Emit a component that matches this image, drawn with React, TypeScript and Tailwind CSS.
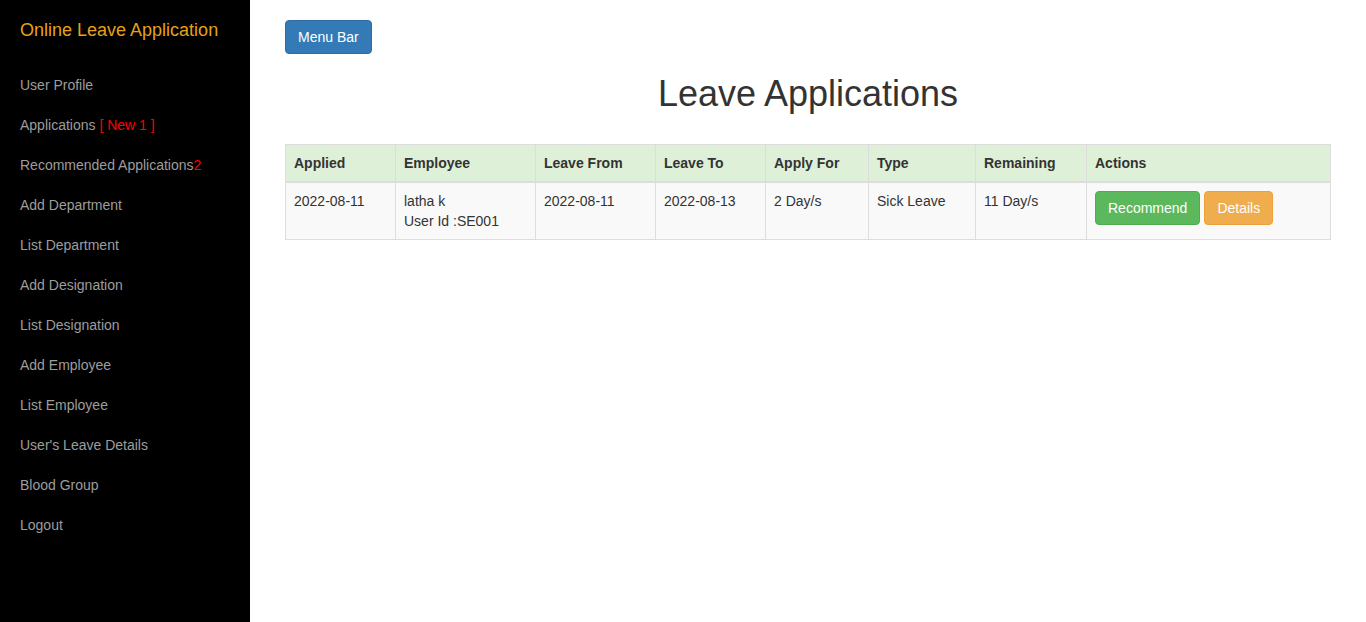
import React from "react";

const menu: { label: string; extra?: string }[] = [
  { label: "User Profile" },
  { label: "Applications ", extra: "[ New 1 ]" },
  { label: "Recommended Applications", extra: "2" },
  { label: "Add Department" },
  { label: "List Department" },
  { label: "Add Designation" },
  { label: "List Designation" },
  { label: "Add Employee" },
  { label: "List Employee" },
  { label: "User's Leave Details" },
  { label: "Blood Group" },
  { label: "Logout" },
];

const cols = [
  { name: "Applied", w: "w-[110px]" },
  { name: "Employee", w: "w-[140px]" },
  { name: "Leave From", w: "w-[120px]" },
  { name: "Leave To", w: "w-[110px]" },
  { name: "Apply For", w: "w-[103px]" },
  { name: "Type", w: "w-[107px]" },
  { name: "Remaining", w: "w-[111px]" },
  { name: "Actions", w: "" },
];

export default function App() {
  return (
    <div className="flex min-h-[622px] font-['Liberation_Sans',Arial,sans-serif] text-[14px] leading-5 text-[#333]">
      <aside className="w-[250px] shrink-0 bg-black">
        <h1 className="px-5 pt-[19px] pb-[14px] text-[18px] leading-[22px] text-[#e6a117]">
          Online Leave Application
        </h1>
        <nav className="flex flex-col pt-[10px]">
          {menu.map((m) => (
            <a key={m.label} className="block px-5 py-[10px] text-[#9d9d9d]">
              {m.label}
              {m.extra && <span className="text-[#ff0000]">{m.extra}</span>}
            </a>
          ))}
        </nav>
      </aside>
      <main className="flex-1 px-[35px] pt-5">
        <button className="h-[34px] rounded border border-[#2e6da4] bg-[#337ab7] px-3 text-white">
          Menu Bar
        </button>
        <h2 className="mt-5 mb-[30px] text-center text-[36px] leading-[40px] text-[#333]">
          Leave Applications
        </h2>
        <table className="w-full table-fixed border-collapse border border-[#ddd]">
          <thead>
            <tr className="bg-[#dff0d8]">
              {cols.map((c) => (
                <th
                  key={c.name}
                  className={`${c.w} border border-b-2 border-[#ddd] p-2 text-left font-bold`}
                >
                  {c.name}
                </th>
              ))}
            </tr>
          </thead>
          <tbody>
            <tr className="bg-[#f9f9f9] align-top">
              <td className="border border-[#ddd] p-2">2022-08-11</td>
              <td className="border border-[#ddd] p-2">
                latha k
                <br />
                User Id :SE001
              </td>
              <td className="border border-[#ddd] p-2">2022-08-11</td>
              <td className="border border-[#ddd] p-2">2022-08-13</td>
              <td className="border border-[#ddd] p-2">2 Day/s</td>
              <td className="border border-[#ddd] p-2">Sick Leave</td>
              <td className="border border-[#ddd] p-2">11 Day/s</td>
              <td className="border border-[#ddd] p-2">
                <div className="flex gap-1">
                  <button className="h-[34px] rounded border border-[#4cae4c] bg-[#5cb85c] px-3 text-white">
                    Recommend
                  </button>
                  <button className="h-[34px] rounded border border-[#eea236] bg-[#f0ad4e] px-3 text-white">
                    Details
                  </button>
                </div>
              </td>
            </tr>
          </tbody>
        </table>
      </main>
    </div>
  );
}
